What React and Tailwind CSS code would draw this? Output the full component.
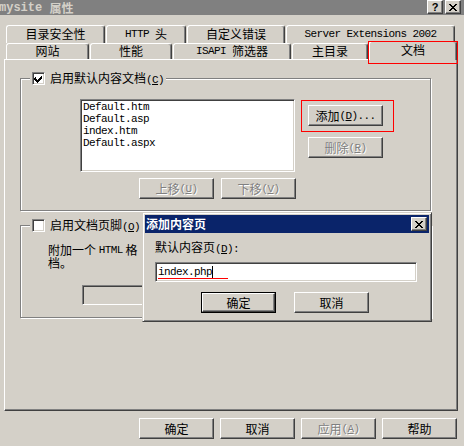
import React from 'react'

const L = ({ children, className = '' }) => (
  <span className={`font-['Liberation_Mono',monospace] text-[11px] tracking-[-0.6px] ${className}`}>{children}</span>
)

const raised = 'bg-[#d4d0c8] border border-t-white border-l-white border-r-[#404040] border-b-[#404040] shadow-[inset_-1px_-1px_0_#808080]'
const sunken = 'border border-t-[#808080] border-l-[#808080] border-r-white border-b-white shadow-[inset_1px_1px_0_#404040,inset_-1px_-1px_0_#d4d0c8]'
const dim = 'text-[#808080] [text-shadow:1px_1px_0_#fff]'

const Btn = ({ children, disabled, def, className = '' }) => {
  if (def) {
    return (
      <div className={`w-[75px] h-[21px] border border-black ${className}`}>
        <div className={`w-full h-full flex items-center justify-center ${raised}`}>{children}</div>
      </div>
    )
  }
  return (
    <div className={`w-[75px] h-[21px] flex items-center justify-center ${raised} ${disabled ? dim : ''} ${className}`}>
      {children}
    </div>
  )
}

const Tab = ({ w, children }) => (
  <div className={`${w} h-full flex items-center justify-center pb-[1px] bg-[#d4d0c8] border-t border-l border-r border-t-white border-l-white border-r-[#404040] rounded-t-[3px] shadow-[inset_-1px_0_0_#808080]`}>
    {children}
  </div>
)

const Check = ({ on }) => (
  <div className={`w-[13px] h-[13px] bg-white ${sunken} flex items-center justify-center`}>
    {on && (
      <svg width="9" height="9" viewBox="0 0 9 9" shapeRendering="crispEdges">
        <path d="M1 3h1v2h1v1h1v-1h1v-1h1v-1h1v-1h1v3h-1v1h-1v1h-1v1h-1v1h-1v-1h-1v-1h-1v-1h-1z" fill="#000" />
      </svg>
    )}
  </div>
)

const Legend = ({ on, children }) => (
  <div className="relative z-10 ml-[10px] px-[2px] w-fit h-[13px] flex items-center gap-[5px] bg-[#d4d0c8]">
    <Check on={on} />
    <span className="leading-[13px]">{children}</span>
  </div>
)

const Group = 'border border-[#808080] shadow-[inset_1px_1px_0_#fff,1px_1px_0_#fff]'

const Cross = () => (
  <svg width="8" height="7" viewBox="0 0 8 7" shapeRendering="crispEdges">
    <path d="M0 0h2v1h1v1h2v-1h1v-1h2v1h-1v1h-1v1h-1v1h1v1h1v1h1v1h-2v-1h-1v-1h-2v1h-1v1h-2v-1h1v-1h1v-1h1v-1h-1v-1h-1z" fill="#000" />
  </svg>
)

export default function App() {
  return (
    <div className="w-[464px] h-[446px] bg-[#d4d0c8] relative overflow-hidden font-['Noto_Sans_CJK_SC',sans-serif] text-[12px] leading-[12px] text-black">
      {/* title bar */}
      <div className="h-[15px] bg-[#808080] flex justify-between">
        <div className="flex items-center ml-[-1px] text-[#d4d0c8] font-bold">
          <span className="font-['Liberation_Mono',monospace] text-[12px]">mysite&nbsp;</span>
          <span>属性</span>
        </div>
        <div className="flex gap-[2px] mr-[3px]">
          <div className={`w-[16px] h-[14px] flex items-center justify-center ${raised} font-['Liberation_Sans',sans-serif] font-bold text-[11px]`}>?</div>
          <div className={`w-[16px] h-[14px] flex items-center justify-center ${raised}`}>
            <Cross />
          </div>
        </div>
      </div>

      {/* tabs back row */}
      <div className="flex gap-[1px] ml-[6px] mt-[10px] h-[18px]">
        <Tab w="w-[99px]">目录安全性</Tab>
        <Tab w="w-[80px]"><L>HTTP&nbsp;</L>头</Tab>
        <Tab w="w-[98px]">自定义错误</Tab>
        <Tab w="w-[169px]"><L>Server Extensions 2002</L></Tab>
      </div>
      {/* tabs front row */}
      <div className="flex items-end gap-[1px] ml-[6px] h-[16px] relative z-10">
        <Tab w="w-[83px]">网站</Tab>
        <Tab w="w-[82px]">性能</Tab>
        <Tab w="w-[118px]"><L>ISAPI&nbsp;</L>筛选器</Tab>
        <Tab w="w-[76px]">主目录</Tab>
        <div className="w-[88px] h-[19px] mb-[-1px] flex items-center justify-center pb-[2px] bg-[#d4d0c8] border-t border-l border-r border-t-white border-l-white border-r-[#404040] rounded-t-[3px] shadow-[inset_-1px_0_0_#808080]">
          文档
        </div>
      </div>

      {/* panel */}
      <div className={`ml-[4px] w-[454px] h-[352px] ${raised} flex flex-col`}>
        {/* group 1 */}
        <div className="ml-[15px] mt-[12px] w-[411px]">
          <Legend on>启用默认内容文档<L>(<u>C</u>)</L></Legend>
          <div className={`-mt-[7px] h-[133px] ${Group} flex pl-[59px] pt-[20px]`}>
            <div className="flex flex-col">
              <div className={`w-[215px] h-[73px] bg-white ${sunken} pl-[2px] pt-[1px] flex flex-col`}>
                {['Default.htm', 'Default.asp', 'index.htm', 'Default.aspx'].map((f) => (
                  <div key={f} className="h-[12px] flex items-center"><L>{f}</L></div>
                ))}
              </div>
              <div className="flex justify-end gap-[7px] mt-[6px] w-[216px]">
                <Btn disabled>上移<L>(<u>U</u>)</L></Btn>
                <Btn disabled>下移<L>(<u>V</u>)</L></Btn>
              </div>
            </div>
            <div className="flex flex-col ml-[5px] mt-[1px]">
              <div className="border border-[#ff0000] pl-[6px] pr-[10px] pt-[4px] pb-[5px]">
                <Btn>添加<L>(<u>D</u>)...</L></Btn>
              </div>
              <Btn disabled className="ml-[7px] mt-[5px]">删除<L>(<u>R</u>)</L></Btn>
            </div>
          </div>
        </div>

        {/* group 2 */}
        <div className="ml-[15px] mt-[8px] w-[412px]">
          <Legend>启用文档页脚<L>(<u>O</u>)</L></Legend>
          <div className={`-mt-[7px] h-[93px] ${Group} pl-[27px] pt-[17px] flex flex-col`}>
            <div className="h-[13px] w-[94px] overflow-hidden whitespace-nowrap flex items-center">
              附加一个&nbsp;<L>HTML</L>&nbsp;格
            </div>
            <div className="h-[13px] flex items-center">档。</div>
            <div className="flex mt-[16px] ml-[34px]">
              <div className={`w-[200px] h-[20px] bg-[#d4d0c8] ${sunken}`} />
            </div>
          </div>
        </div>
      </div>

      {/* bottom buttons */}
      <div className="flex justify-end gap-[6px] mt-[7px] pr-[7px]">
        <Btn>确定</Btn>
        <Btn>取消</Btn>
        <Btn disabled>应用<L>(<u>A</u>)</L></Btn>
        <Btn>帮助</Btn>
      </div>

      {/* red annotation on selected tab */}
      <div className="absolute left-[368px] top-[41px] w-[90px] h-[23px] border border-[#ff0000] z-20 pointer-events-none" />

      {/* dialog */}
      <div className="absolute left-[142px] top-[212px] w-[290px] h-[110px] z-30 bg-[#d4d0c8] border border-t-[#d4d0c8] border-l-[#d4d0c8] border-r-[#404040] border-b-[#404040] shadow-[inset_1px_1px_0_#fff,inset_-1px_-1px_0_#808080] p-[2px] flex flex-col">
        <div className="h-[18px] bg-[#0a246a] flex items-center justify-between">
          <span className="text-white font-bold ml-[1px]">添加内容页</span>
          <div className={`w-[16px] h-[14px] mr-[2px] flex items-center justify-center ${raised}`}>
            <Cross />
          </div>
        </div>
        <div className="pl-[10px] mt-[8px]">默认内容页<L>(<u>D</u>):</L></div>
        <div className={`ml-[10px] mt-[7px] w-[262px] h-[20px] bg-white ${sunken} relative flex items-center pl-[2px]`}>
          <L>index.php</L>
          <span className="w-[1px] h-[13px] bg-black" />
          <div className="absolute left-[2px] bottom-[2px] w-[70px] h-[1px] bg-[#ff0000]" />
        </div>
        <div className="flex gap-[18px] pl-[56px] mt-[10px]">
          <Btn def>确定</Btn>
          <Btn>取消</Btn>
        </div>
      </div>
    </div>
  )
}
